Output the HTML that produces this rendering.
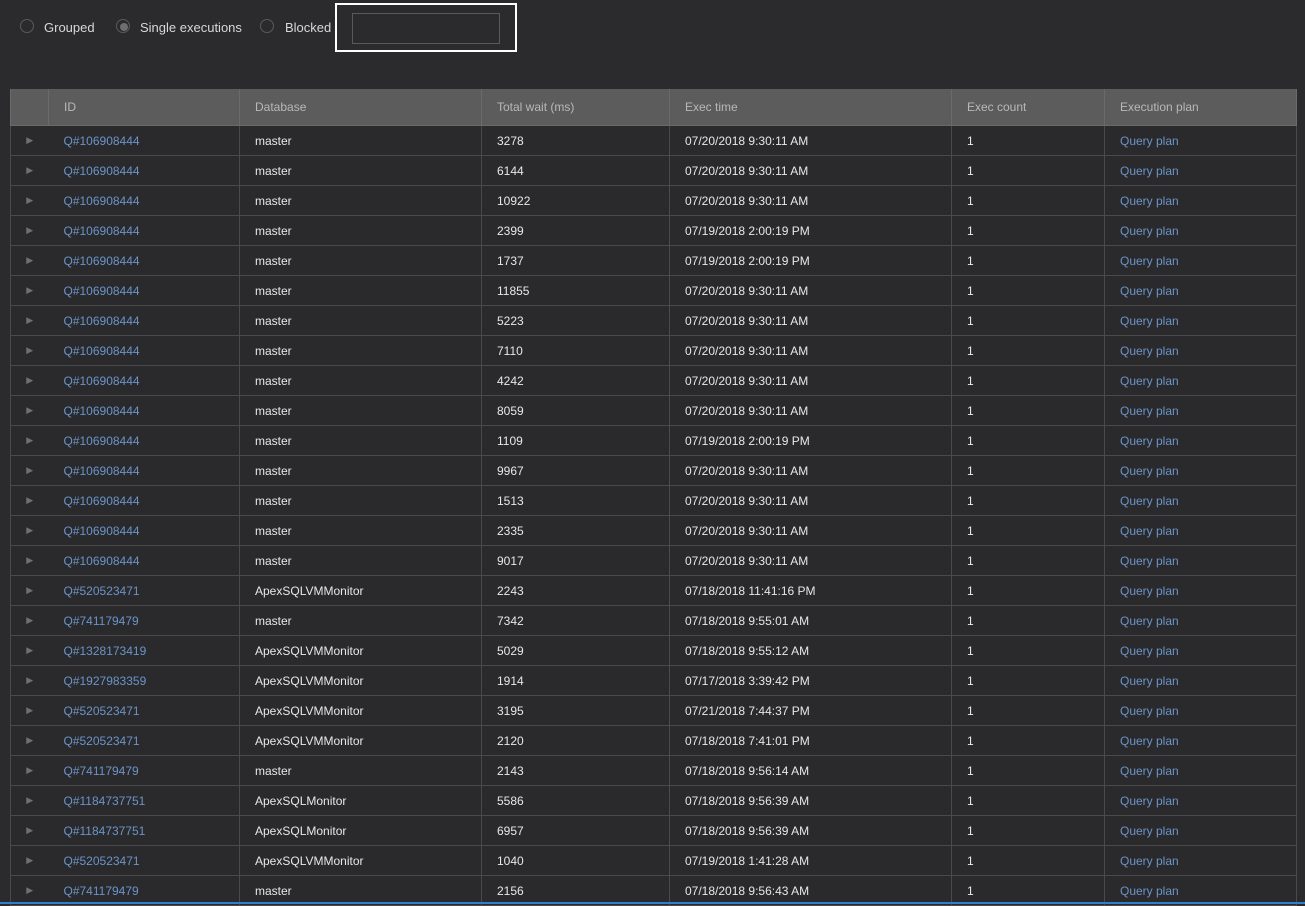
<!DOCTYPE html>
<html><head><style>
body{margin:0;background:#2b2b2d;width:1305px;height:904px;overflow:hidden;font-family:"Liberation Sans",sans-serif;font-size:12px;color:#e8e8e8;position:relative}
.rad{position:absolute;top:19px;width:14px;height:14px;border:1px solid #5a5a5a;border-radius:50%;box-sizing:border-box}
.lbl{position:absolute;top:20px;color:#d8d8d8;font-size:13px}
.box{position:absolute;left:335px;top:3px;width:182px;height:49px;border:2px solid #fff;box-sizing:border-box}
.box div{position:absolute;left:15px;top:8px;width:148px;height:31px;border:1px solid #5a5a5a;box-sizing:border-box}
table{position:absolute;left:10px;top:89px;border-collapse:collapse;table-layout:fixed;width:1286px}
th{background:#5c5c5c;color:#b8b8b8;font-weight:normal;text-align:left;height:36px;padding:0 0 0 15px;border:1px solid #6a6a6a;border-top:none}
td{height:29px;padding:0 0 0 15px;border-bottom:1px solid #4a4a4a;border-left:1px solid #4a4a4a;background:#2a2a2c;white-space:nowrap}
td.e{border-left:1px solid #4a4a4a;padding:0;text-align:center;color:#707070;font-size:9px}
td.n{border-left:none}
.l{color:#6b94c9}
.bl{position:absolute;left:0;top:902px;width:1305px;height:2px;background:#2e7fcf}
</style></head><body>
<div class="rad" style="left:20px"></div><div class="lbl" style="left:44px">Grouped</div>
<div class="rad" style="left:116px"></div><div style="position:absolute;left:120px;top:23px;width:8px;height:8px;border-radius:50%;background:#6e6e6e"></div><div class="lbl" style="left:140px">Single executions</div>
<div class="rad" style="left:260px"></div><div class="lbl" style="left:285px">Blocked</div>
<div class="box"><div></div></div>
<table>
<colgroup><col style="width:38px"><col style="width:191px"><col style="width:242px"><col style="width:188px"><col style="width:282px"><col style="width:153px"><col style="width:192px"></colgroup>
<tr><th></th><th>ID</th><th>Database</th><th>Total wait (ms)</th><th>Exec time</th><th>Exec count</th><th>Execution plan</th></tr>
<tbody id="b"></tbody>
</table>
<div class="bl"></div>
<script>
var d=[["Q#106908444","master","3278","07/20/2018 9:30:11 AM"],["Q#106908444","master","6144","07/20/2018 9:30:11 AM"],["Q#106908444","master","10922","07/20/2018 9:30:11 AM"],["Q#106908444","master","2399","07/19/2018 2:00:19 PM"],["Q#106908444","master","1737","07/19/2018 2:00:19 PM"],["Q#106908444","master","11855","07/20/2018 9:30:11 AM"],["Q#106908444","master","5223","07/20/2018 9:30:11 AM"],["Q#106908444","master","7110","07/20/2018 9:30:11 AM"],["Q#106908444","master","4242","07/20/2018 9:30:11 AM"],["Q#106908444","master","8059","07/20/2018 9:30:11 AM"],["Q#106908444","master","1109","07/19/2018 2:00:19 PM"],["Q#106908444","master","9967","07/20/2018 9:30:11 AM"],["Q#106908444","master","1513","07/20/2018 9:30:11 AM"],["Q#106908444","master","2335","07/20/2018 9:30:11 AM"],["Q#106908444","master","9017","07/20/2018 9:30:11 AM"],["Q#520523471","ApexSQLVMMonitor","2243","07/18/2018 11:41:16 PM"],["Q#741179479","master","7342","07/18/2018 9:55:01 AM"],["Q#1328173419","ApexSQLVMMonitor","5029","07/18/2018 9:55:12 AM"],["Q#1927983359","ApexSQLVMMonitor","1914","07/17/2018 3:39:42 PM"],["Q#520523471","ApexSQLVMMonitor","3195","07/21/2018 7:44:37 PM"],["Q#520523471","ApexSQLVMMonitor","2120","07/18/2018 7:41:01 PM"],["Q#741179479","master","2143","07/18/2018 9:56:14 AM"],["Q#1184737751","ApexSQLMonitor","5586","07/18/2018 9:56:39 AM"],["Q#1184737751","ApexSQLMonitor","6957","07/18/2018 9:56:39 AM"],["Q#520523471","ApexSQLVMMonitor","1040","07/19/2018 1:41:28 AM"],["Q#741179479","master","2156","07/18/2018 9:56:43 AM"]];
var h="";d.forEach(function(r){h+='<tr><td class="e">&#9654;</td><td class="n l">'+r[0]+'</td><td>'+r[1]+'</td><td>'+r[2]+'</td><td>'+r[3]+'</td><td>1</td><td class="l" style="border-right:1px solid #4a4a4a">Query plan</td></tr>'});
document.getElementById("b").innerHTML=h;
</script>
</body></html>
